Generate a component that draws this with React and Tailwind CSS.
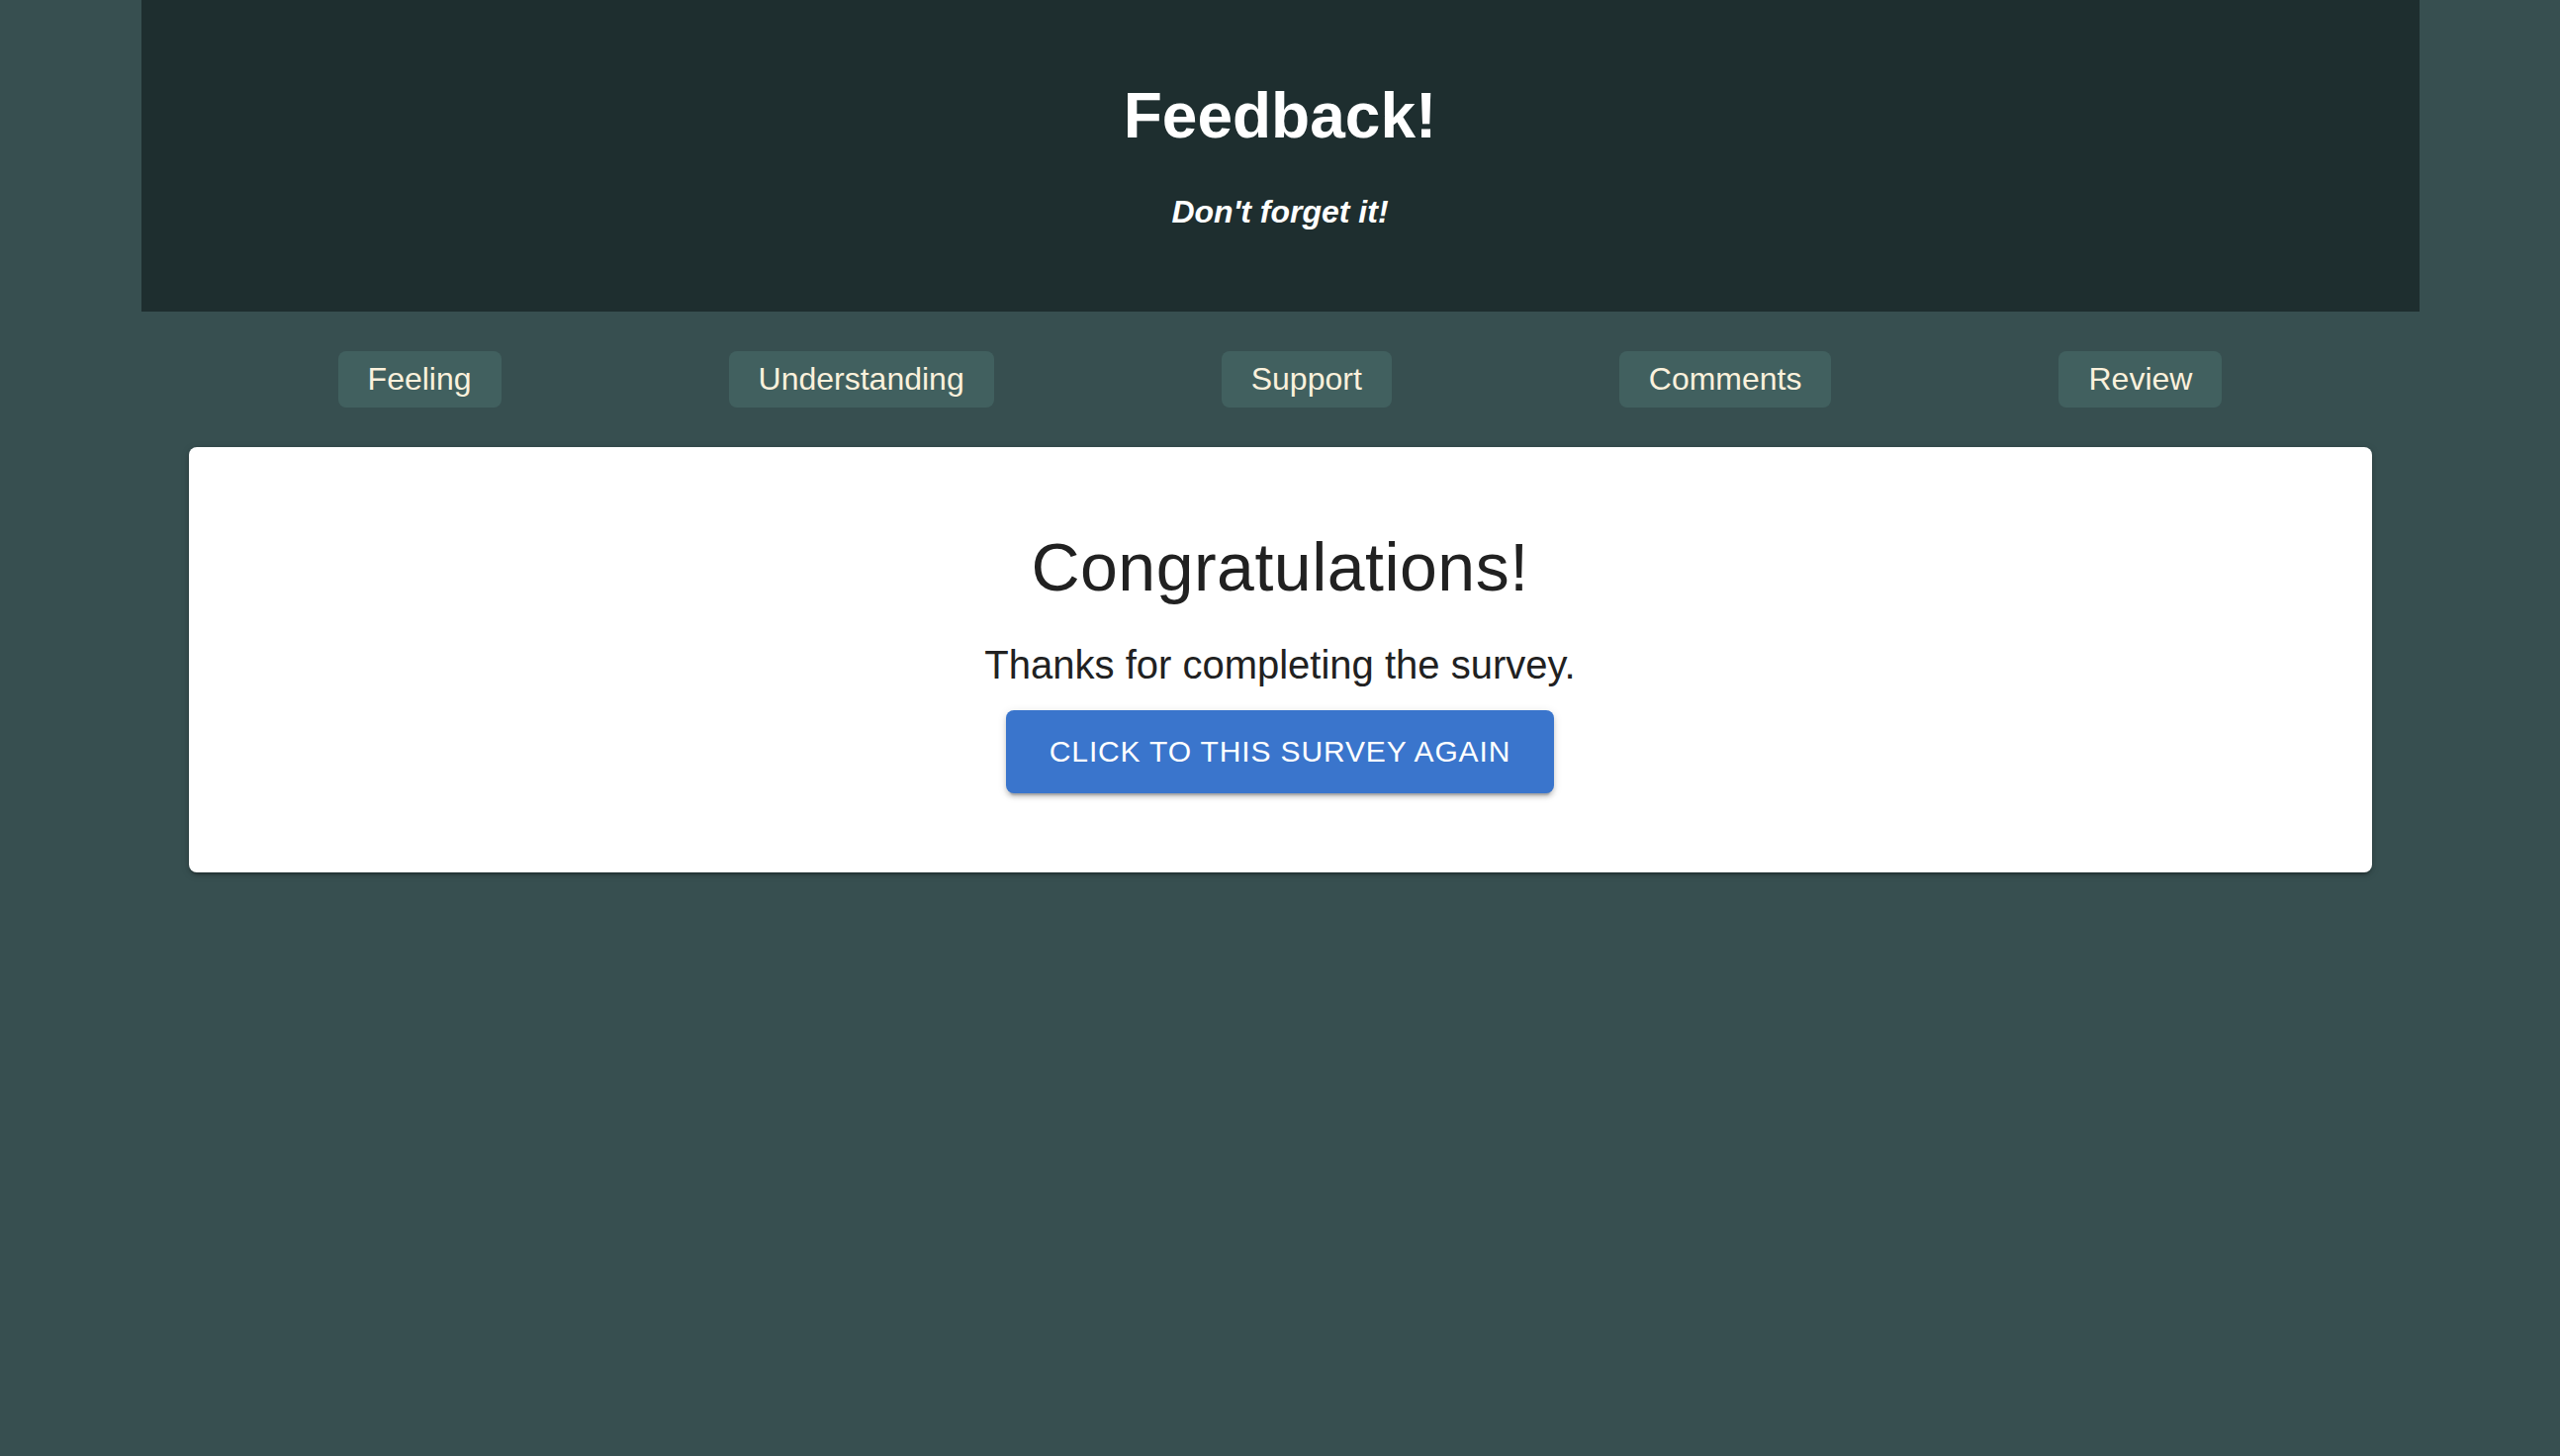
export default function App() {
  const tabs = ['Feeling', 'Understanding', 'Support', 'Comments', 'Review'];

  return (
    <div className="min-h-screen bg-[#374f50]" style={{ fontFamily: '"Liberation Sans", Arial, sans-serif' }}>
      <div className="w-[2303px] mx-auto">
        {/* Header */}
        <header className="bg-[#1e2e2f] pt-[85px] pb-[85px] text-center text-white">
          <h1 className="text-[64px] leading-[64px] font-bold">Feedback!</h1>
          <h4 className="mt-[49px] text-[32px] leading-[32px] font-bold italic">Don't forget it!</h4>
        </header>

        {/* Step nav */}
        <nav className="flex justify-center gap-[230px] mt-[40px]">
          {tabs.map(t => (
            <button key={t} className="bg-[#41605f] text-[#fbf1dc] text-[32px] leading-[37px] px-[30px] py-[10px] rounded-[8px]">
              {t}
            </button>
          ))}
        </nav>

        {/* Result card */}
        <div className="mx-[48px] mt-[40px] bg-white rounded-[8px] pt-[87px] pb-[80px] flex flex-col items-center text-[#212121] shadow-[0_4px_2px_-2px_rgba(0,0,0,0.2),0_2px_4px_0_rgba(0,0,0,0.14),0_2px_10px_0_rgba(0,0,0,0.12)]">
          <h2 className="text-[68px] leading-[68px] tracking-[0.5px]">Congratulations!</h2>
          <p className="mt-[45px] text-[40px] leading-[40px]">Thanks for completing the survey.</p>
          <button className="mt-[26px] bg-[#3a75cc] text-white uppercase text-[30px] leading-[52px] tracking-[0.857px] px-[44px] py-[16px] rounded-[8px] shadow-[0_6px_2px_-4px_rgba(0,0,0,0.2),0_4px_4px_0_rgba(0,0,0,0.14),0_2px_10px_0_rgba(0,0,0,0.12)]">
            Click to this survey again
          </button>
        </div>
      </div>
    </div>
  );
}
